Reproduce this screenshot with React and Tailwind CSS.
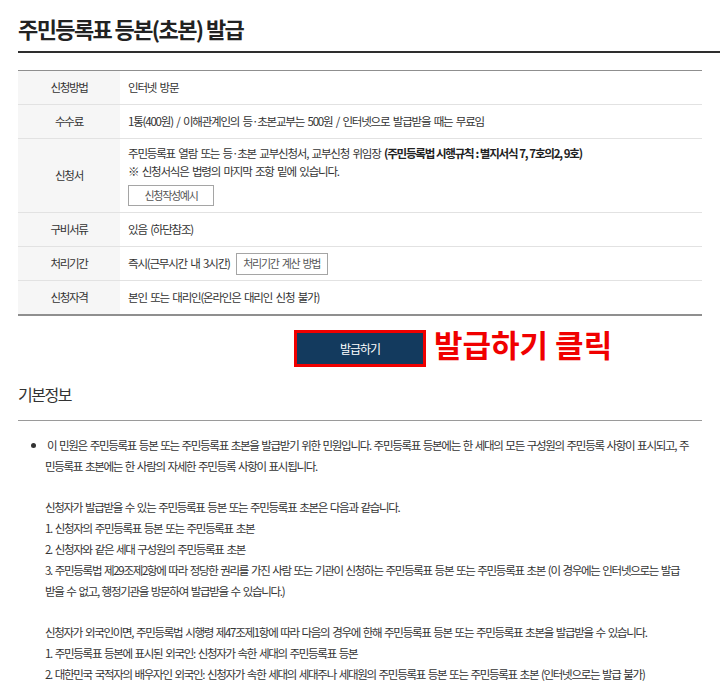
import React from "react";

const F = { fontFamily: '"Noto Sans CJK KR", "Noto Sans", sans-serif' };

function Row({ label, children, h = "h-[33px]", last = false }) {
  return (
    <div className={`flex ${last ? "border-b-2 border-[#8f8f8f]" : "border-b border-[#e2e2e2]"}`}>
      <div className={`w-[102px] shrink-0 bg-[#f6f6f6] flex items-center justify-center text-[11.5px] tracking-[-1.3px] text-[#333] ${h}`}>
        {label}
      </div>
      <div className={`flex-1 pl-[8px] text-[11.5px] tracking-[-1.2px] [word-spacing:2px] text-[#333] flex items-center whitespace-nowrap ${h}`}>
        {children}
      </div>
    </div>
  );
}

function SmallBtn({ children, w }) {
  return (
    <div className={`border border-[#a5a5a5] bg-white text-[#555] text-[11px] tracking-[-1.3px] [word-spacing:2px] flex items-center justify-center ${w}`}>
      {children}
    </div>
  );
}

const lines = [
  { t: "이 민원은 주민등록표 등본 또는 주민등록표 초본을 발급받기 위한 민원입니다. 주민등록표 등본에는 한 세대의 모든 구성원의 주민등록 사항이 표시되고, 주", first: true },
  { t: "민등록표 초본에는 한 사람의 자세한 주민등록 사항이 표시됩니다." },
  { t: "" },
  { t: "신청자가 발급받을 수 있는 주민등록표 등본 또는 주민등록표 초본은 다음과 같습니다." },
  { t: "1. 신청자의 주민등록표 등본 또는 주민등록표 초본" },
  { t: "2. 신청자와 같은 세대 구성원의 주민등록표 초본" },
  { t: "3. 주민등록법 제29조제2항에 따라 정당한 권리를 가진 사람 또는 기관이 신청하는 주민등록표 등본 또는 주민등록표 초본 (이 경우에는 인터넷으로는 발급" },
  { t: "받을 수 없고, 행정기관을 방문하여 발급받을 수 있습니다.)" },
  { t: "" },
  { t: "신청자가 외국인이면, 주민등록법 시행령 제47조제1항에 따라 다음의 경우에 한해 주민등록표 등본 또는 주민등록표 초본을 발급받을 수 있습니다." },
  { t: "1. 주민등록표 등본에 표시된 외국인: 신청자가 속한 세대의 주민등록표 등본" },
  { t: "2. 대한민국 국적자의 배우자인 외국인: 신청자가 속한 세대의 세대주나 세대원의 주민등록표 등본 또는 주민등록표 초본 (인터넷으로는 발급 불가)" },
];

export default function App() {
  return (
    <div style={F} className="w-[720px] h-[693px] overflow-hidden bg-white pl-[18px] text-[#333]">
      {/* Title */}
      <div className="pt-[13px] pb-[8px] border-b-2 border-[#2e2e2e]">
        <h1 className="text-[22px] leading-[30px] font-bold tracking-[-1.6px] text-[#222]">
          주민등록표 등본(초본) 발급
        </h1>
      </div>

      {/* Table */}
      <div className="mt-[17px] w-[684px] border-t border-[#8f8f8f]">
        <Row label="신청방법">인터넷 방문</Row>
        <Row label="수수료">1통(400원) / 이해관계인의 등·초본교부는 500원 / 인터넷으로 발급받을 때는 무료임</Row>
        <div className="flex border-b border-[#e2e2e2]">
          <div className="w-[102px] shrink-0 bg-[#f6f6f6] flex items-center justify-center text-[11.5px] tracking-[-1.3px] h-[73px]">
            신청서
          </div>
          <div className="flex-1 pl-[8px] pt-[6px] text-[11.5px] tracking-[-1.2px] [word-spacing:2px] leading-[17.5px] h-[73px]">
            <div className="whitespace-nowrap">
              주민등록표 열람 또는 등·초본 교부신청서, 교부신청 위임장{" "}
              <b className="font-bold text-[#222] tracking-[-1.2px] [word-spacing:0.5px]">(주민등록법 시행규칙 : 별지서식 7, 7호의2, 9호)</b>
            </div>
            <div className="whitespace-nowrap">※ 신청서식은 법령의 마지막 조항 밑에 있습니다.</div>
            <div className="mt-[5px]">
              <SmallBtn w="w-[86px] h-[21px]">신청작성예시</SmallBtn>
            </div>
          </div>
        </div>
        <Row label="구비서류">있음 (하단참조)</Row>
        <Row label="처리기간">
          <span>즉시(근무시간 내 3시간)</span>
          <div className="ml-[6px]">
            <SmallBtn w="w-[92px] h-[22px]">처리기간 계산 방법</SmallBtn>
          </div>
        </Row>
        <Row label="신청자격" h="h-[33px]" last>
          본인 또는 대리인(온라인은 대리인 신청 불가)
        </Row>
      </div>

      {/* Issue button */}
      <div className="w-[684px] mt-[14px] flex justify-center">
        <div className="relative">
          <button className="w-[132px] h-[37px] border-[3px] border-[#f00000] bg-[#133a5e] text-white text-[12px] tracking-[-1px] flex items-center justify-center">
            발급하기
          </button>
          <span className="absolute left-[140px] top-[-7px] whitespace-nowrap text-[31px] leading-[42px] font-bold text-[#f00000]">
            발급하기 클릭
          </span>
        </div>
      </div>

      {/* 기본정보 */}
      <div className="mt-[15px] w-[684px] pb-[14px] border-b border-[#9a9a9a]">
        <h2 className="text-[16px] leading-[24px] tracking-[-1.5px] text-[#333]">기본정보</h2>
      </div>

      <div className="mt-[14px] flex w-[684px]">
        <div className="w-[27px] shrink-0">
          <div className="ml-[13px] mt-[8px] w-[5px] h-[5px] rounded-full bg-[#333]" />
        </div>
        <div className="flex-1 text-[11.5px] tracking-[-1.3px] [word-spacing:1.5px] leading-[20.8px] text-[#333]">
          {lines.map((l, i) => (
            <div key={i} className={`whitespace-nowrap h-[20.8px] ${l.first ? "pl-[2px]" : ""}`}>
              {l.t}
            </div>
          ))}
        </div>
      </div>
    </div>
  );
}
